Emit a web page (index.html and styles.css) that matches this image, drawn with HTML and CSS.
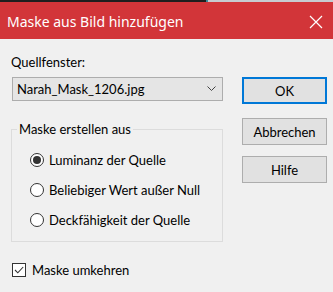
FILE: index.html
```html
<!DOCTYPE html>
<html lang="de">
<head>
<meta charset="utf-8">
<link rel="stylesheet" href="styles.css">
</head>
<body>
<div class="topstrip"><span class="ts-dark"></span><span class="ts-accent"></span><span class="ts-light"></span></div>
<div class="titlebar">
  <span class="title">Maske aus Bild hinzufügen</span>
  <svg class="close" width="14" height="14" viewBox="0 0 14 14"><path d="M1 1 L13 13 M13 1 L1 13" stroke="#fff" stroke-width="1.2" fill="none"/></svg>
</div>
<div class="content">
  <div class="main">
    <div class="left">
      <div class="label">Quellfenster:</div>
      <div class="combo">
        <span class="combo-text">Narah_Mask_1206.jpg</span>
        <svg class="chev" width="9" height="6" viewBox="0 0 9 6"><path d="M0.5 0.5 L4.5 4.5 L8.5 0.5" stroke="#444" stroke-width="1" fill="none"/></svg>
      </div>
      <fieldset class="group">
        <legend>Maske erstellen aus</legend>
        <div class="radio-row"><span class="radio checked"></span><span>Luminanz der Quelle</span></div>
        <div class="radio-row"><span class="radio"></span><span>Beliebiger Wert außer Null</span></div>
        <div class="radio-row"><span class="radio"></span><span>Deckfähigkeit der Quelle</span></div>
      </fieldset>
    </div>
    <div class="right">
      <div class="btn default">OK</div>
      <div class="btn btn-cancel">Abbrechen</div>
      <div class="btn btn-help">Hilfe</div>
    </div>
  </div>
  <div class="check-row">
    <span class="checkbox"><svg width="12" height="12" viewBox="0 0 12 12"><path d="M2 6 L4.8 8.8 L10.2 3" stroke="#333" stroke-width="1.1" fill="none"/></svg></span>
    <span>Maske umkehren</span>
  </div>
</div>
</body>
</html>
```
FILE: styles.css
```css
html, body {
  margin: 0;
  padding: 0;
}
body {
  width: 333px;
  height: 292px;
  overflow: hidden;
  background: #f0f0f0;
  font-family: Lato, "Noto Sans", sans-serif;
  font-size: 13px;
  line-height: 16px;
  color: #000;
}
.topstrip {
  display: flex;
  height: 2px;
}
.ts-dark { width: 206px; background: #1e1e1e; }
.ts-accent { width: 2px; background: #3a8a9a; }
.ts-light { flex: 1; background: #c7ccd1; }
.titlebar {
  height: 37px;
  background: #d23539;
  display: flex;
  align-items: center;
  justify-content: space-between;
  padding: 2px 10px 0 7px;
  box-sizing: border-box;
}
.title {
  color: #fff;
  font-family: "Noto Sans", sans-serif;
  font-size: 14px;
  line-height: 20px;
}
.close { display: block; }
.content {
  padding: 15px 0 0 11px;
}
.main {
  display: flex;
}
.left {
  width: 212px;
}
.label {
  padding-left: 0;
}
.combo {
  margin: 7px 0 0 1px;
  height: 24px;
  box-sizing: border-box;
  border: 1px solid #adadad;
  background: #e5e5e5;
  display: flex;
  align-items: center;
  justify-content: space-between;
  padding: 0 6px 0 4px;
}
.chev { display: block; }
.group {
  margin: 20px 0 0 0;
  padding: 15px 0 13px 5px;
  border: 1px solid #dcdcdc;
  min-width: 0;
}
.group legend {
  padding: 0 2px;
  line-height: 16px;
}
.radio-row {
  display: flex;
  align-items: center;
  height: 16px;
  padding-left: 13px;
  gap: 5px;
}
.radio-row + .radio-row {
  margin-top: 14px;
}
.radio {
  width: 14px;
  height: 14px;
  box-sizing: border-box;
  border: 1px solid #333;
  border-radius: 50%;
  background: #fff;
  display: flex;
  align-items: center;
  justify-content: center;
}
.radio.checked::after {
  content: "";
  width: 8px;
  height: 8px;
  border-radius: 50%;
  background: #333;
}
.right {
  margin-left: 19px;
  padding-top: 23px;
  display: flex;
  flex-direction: column;
}
.btn {
  width: 85px;
  height: 27px;
  box-sizing: border-box;
  border: 1px solid #adadad;
  background: #e1e1e1;
  display: flex;
  align-items: center;
  justify-content: center;
}
.btn.default {
  border: 2px solid #0078d7;
}
.btn-cancel { margin-top: 14px; }
.btn-help { margin-top: 11px; }
.check-row {
  margin-top: 20px;
  display: flex;
  align-items: center;
  height: 16px;
  padding-left: 1px;
  gap: 6px;
}
.checkbox {
  width: 14px;
  height: 14px;
  box-sizing: border-box;
  border: 1px solid #333;
  background: #fff;
  display: flex;
  align-items: center;
  justify-content: center;
}
.checkbox svg { display: block; }
```
